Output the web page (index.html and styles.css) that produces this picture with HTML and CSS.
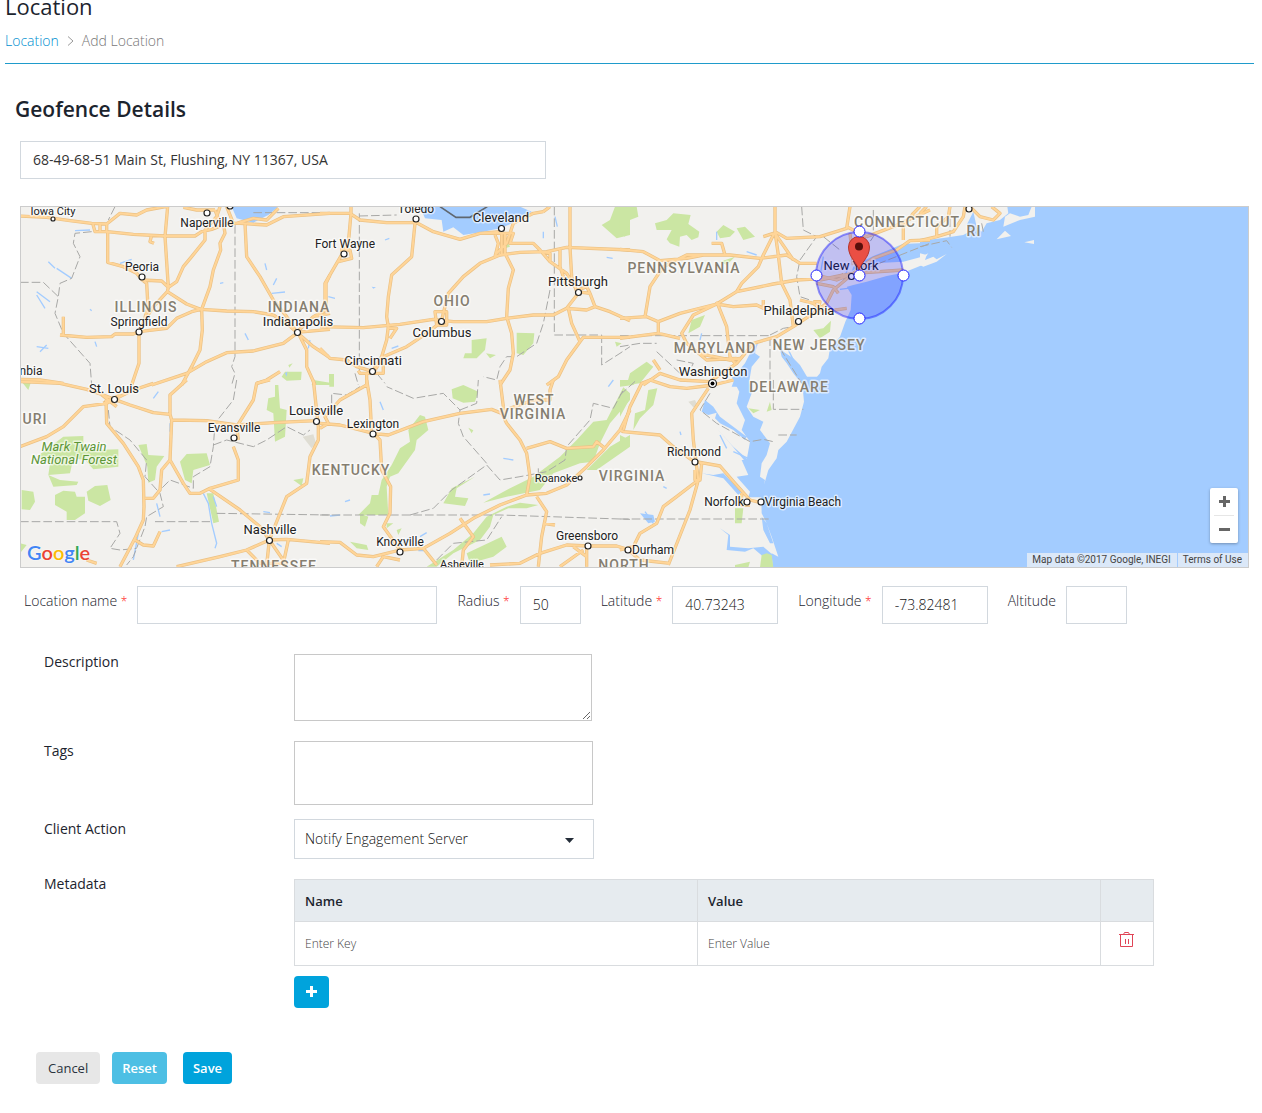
FILE: index.html
```html
<!DOCTYPE html>
<html lang="en">
<head>
  <meta charset="UTF-8">
  <meta name="viewport" content="width=device-width, initial-scale=1.0">
  <title>Add Location</title>
  <link rel="stylesheet" href="styles.css">
</head>
<body>
  <header class="page-header">
    <h1>Location</h1>
    <nav class="breadcrumb">
      <a href="#">Location</a>
      <svg width="7" height="10" viewBox="0 0 7 10"><path d="M1 .5 6 5 1 9.500" fill="none" stroke="#999"/></svg>
      <span>Add Location</span>
    </nav>
  </header>

  <main>
    <h2>Geofence Details</h2>
    <input class="field address" type="text" aria-label="Address" value="68-49-68-51 Main St, Flushing, NY 11367, USA">

    <div class="map">
      <svg class="map-canvas" viewBox="21 207 1227 360" preserveAspectRatio="xMinYMin slice">
        <defs>
          <g id="roads">
            <path transform="translate(60 600)" d="M0 48 80 52 150 62 215 70 260 72 300 40 350 45 380 30 445 18M260 72V95L225 95 218 70M240 70V92M262 95 340 103 435 108 525 108 545 95 575 88 620 70 660 70 740 75 790 50 930 40M395 105 390 125 402 130M263 95V187L310 200 350 220 365 238 380 250 384 320 370 370 357 395M365 240 425 243 445 262 470 245 490 200 515 170 555 120 555 90 590 50 600 20M443 20 435 110 445 262 442 275 500 312 542 328 620 333 700 335 760 345 800 370 830 397M442 275 400 320 384 345M490 22 530 30 585 30M610 70 615 100 600 130 602 150 580 210 570 260 545 328 547 390 540 450 515 500 485 555M357 395 340 402 285 402 275 410 200 412 120 405M130 350V405M357 395 440 385 470 355 515 335 542 328M357 395V490L335 555M395 555 500 520 560 485 620 458 700 453 790 430 830 400M675 70 680 170 720 230 760 300 800 350 830 397 930 388M830 397 880 350 930 340M835 400 860 450 860 500 885 555M840 405 880 440 925 470M930 225 918 250 918 330 880 350M640 70 620 20M585 30 600 70M650 70 700 55 740 60 775 25M0 538 60 540 130 550M710 550 740 540 780 515"/>
            <path transform="translate(960 600)" d="M0 40 90 40 120 60 200 68 290 68 340 95 420 118 480 100 540 95M93 20V40L85 130 50 190 15 250 15 310M60 150 90 150 95 175 55 185M285 70 275 170 215 225 205 290 200 350 205 380 200 420 185 470 160 510M0 380 130 383 240 373 340 358 400 365 500 365 560 355 640 345 700 345 740 325 775 280M365 360 385 280 430 230 480 190 540 165 600 157 680 155 740 142 930 150M555 100 555 160 580 210 565 265 560 350 575 400 580 460 570 510 540 555M525 105 535 130 525 170M545 100V165M480 100H580L570 130H640L660 150 690 185 740 220 770 270M580 70 560 130 525 165M670 35 640 40 580 70M690 20 670 35M750 20V142L755 230 770 275 810 280 825 320 870 335 930 362M720 150V200L740 260M660 155 690 160 690 185M740 325 800 330 825 320M745 325 755 370 780 425 740 480 715 530 680 555M780 425 790 412H930M345 335H380V375H350ZM365 365 320 400 260 440 190 470 165 510M0 445 30 475 80 480 110 500 150 512M115 512 120 520H190V470M140 555V520M205 385H230L210 415M775 270 800 260 810 280"/>
            <path transform="translate(1860 600)" d="M0 148 70 155 120 182 200 175 250 165 330 165 420 175 500 165 540 190 590 190M0 355 80 350 115 365 180 340 290 312 340 320 410 315 430 325V300M465 20V95L430 165 415 200 365 250 350 275M465 95 475 165 485 250 510 300 520 380M275 130 305 130 315 165M430 110 460 100M465 95 500 115 600 110 680 85 690 20M465 100 520 180M75 350 90 260 130 200 200 165 250 165M290 312 350 275 460 252 530 240 620 235 700 220 850 210M290 305 320 380 330 470 345 490M290 312 220 345 185 400 200 430 260 480 350 475M115 365V400L0 415M115 400 180 415M235 460 330 480 360 475M270 545 350 490 400 430 470 410 520 380 580 340 620 310 640 270 700 220 760 175 830 150 870 122 930 120M590 250 640 260 655 280M540 300 580 310 610 335 680 325M580 305H600L590 345M850 120V80L880 40 900 20M700 195 690 100M680 80 740 110 820 80 930 30M590 225 650 240 700 220M600 240 670 225M70 555 120 520 180 540 270 545M120 510 100 480"/>
            <path transform="translate(60 1140)" d="M0 5 120 10 200 28 250 45 283 58 340 30 400 10M283 58 260 70 190 80 130 140 80 170 0 200M240 40 290 80M250 70 300 45M258 60 260 130 310 190 355 260 370 300 372 380 370 420 345 475 300 560M283 58 330 75 400 98 450 103V45L500 0M450 103 455 120 560 122 650 135 760 128 890 122M455 120 450 240 425 270 420 330 400 355H375M450 240 490 310 510 340 540 340 570 325 655 300 655 240 640 200M650 140 700 60 710 10 750 0M650 135 655 180M570 328 660 390 720 440 748 480 680 510 600 530 470 560M748 480 800 350 860 310 870 230 895 180 895 140 880 0M748 480 800 478 930 490M748 480 800 555M748 480 740 555M680 510 720 550H790L805 480M345 480 370 495 400 498 420 455M200 540 230 550"/>
            <path transform="translate(960 1140)" d="M140 0 150 60 155 160 205 165 310 125 420 100 515 88 545 100 560 130 600 180 620 220 630 290 620 345M0 130 60 135 160 160M0 145 25 130 15 110 60 60 140 15M160 160 180 180 185 270 212 320 210 400 190 440 240 510 160 530 110 525 60 487 0 485M240 510 310 505 390 460 460 415 540 375 620 345 680 340 740 315 800 260 850 210 900 150 930 90M190 530 170 560M190 530 240 540M310 505 350 555M420 415 460 470 430 510 425 560M510 555 600 550 660 520 740 495 803 498 890 498 930 510M650 350 680 395 665 470 655 560M670 430 705 435M620 205 690 185 740 205 820 200 830 185 855 205M540 0 550 80 555 110M570 85 640 60 690 60 690 30 700 0M800 498V560M720 560 790 510M760 500 800 530"/>
            <path transform="translate(1860 1140)" d="M0 150 10 155 120 165 160 200 215 240M10 150 30 80 65 10 90 0 150 20 200 25 280 15 340 0M265 25 215 100 220 180 228 245 235 300 210 390 145 555M228 245 300 258 345 310 390 360 430 370M215 240 245 250 240 300H225V270M235 300 170 350 130 380 110 430 60 460 40 500 0 510M25 510 60 540 150 550M365 340V375H390"/>
            <path transform="translate(2760 600)" d="M0 122 50 110 100 95 130 50 135 20M50 110V80L85 50 90 20M150 20 180 50 220 60 240 40 215 20M0 40 20 20"/>
          </g>
        </defs>

        <rect class="land" x="21" y="207" width="1227" height="360"/>

        <g transform="scale(.33333)">
          <g class="park">
            <path transform="translate(60 600)" d="M795 515 845 515 843 540 800 542 785 530ZM805 495 818 490 808 503ZM875 555 880 540 930 548V555Z"/>
            <path transform="translate(960 600)" d="M845 75 870 60 885 20H930V105L890 115ZM455 420 500 415 495 450 470 475 430 475 435 460 455 460ZM590 398 643 400 640 430 610 465 590 460ZM498 460 528 465 510 475ZM27 522H42V555H27ZM560 120 570 140 555 145ZM885 425 905 430 890 440Z"/>
            <path transform="translate(1860 600)" d="M0 20H50L55 50 30 60 25 80 15 110 0 100ZM105 70 140 60 160 40 212 45 205 72 238 95 235 112 215 120 200 105 180 110 178 140 150 130 140 118 155 90 110 90ZM215 360 255 345 240 380 205 400ZM580 390 610 385 633 362 630 395 600 415ZM350 85 375 80 405 110 370 120ZM290 95 310 75 345 95 330 110 300 115ZM300 185 345 170 320 195ZM30 520 80 485 100 500 60 550 20 555Z"/>
            <path transform="translate(60 1140)" d="M130 170 190 168V210H225L295 208V260L220 268 195 240 160 235 150 280 85 285 90 250 50 230ZM5 330 40 335 45 365 30 390 5 388ZM105 345 130 332 165 335 170 350 195 350V400L165 420H140V395L105 375ZM200 335 225 318 262 315 272 360 240 378 205 362ZM355 195 380 192 385 225 433 228 410 260 405 300 385 308 382 260ZM480 245 500 222 560 220 570 255 520 270 515 310 495 300ZM560 340H580L597 425 580 430ZM765 15 775 15 780 85 800 90 795 170 765 185 760 100 740 90 745 55 765 50ZM820 300 850 295 845 318ZM85 285 120 300 175 305 170 315 100 320ZM5 5 35 0 25 30ZM0 490 20 495 0 520Z"/>
            <path transform="translate(960 1140)" d="M395 28 430 15 475 35 465 65 430 68 398 55ZM300 105 315 110 325 150 290 180 285 210 235 280 210 290 200 320 205 405 115 405 150 370 155 345 175 345 185 300 215 255 240 205 270 185 265 150ZM910 22 930 40V60L870 130 840 190 820 245 780 250 700 280 660 330 560 350 490 368 560 330 640 290 720 230 770 180 820 125 860 120ZM465 290 410 325 405 350 445 355 435 378 370 370 395 325ZM870 200 930 165V200L830 270H800ZM600 368 655 375 620 385 565 385 520 405 510 440 480 480 400 520 350 560H320L400 510 460 460 500 410 560 380ZM545 470 560 500 520 530 450 550 440 520ZM90 485 140 495 145 510 110 505ZM120 400 145 410 135 440 120 430ZM445 143 460 151 455 160ZM230 450 245 445 235 465ZM200 430 220 430 200 445ZM28 0H42V20H28Z"/>
            <path transform="translate(1860 1140)" d="M0 20 40 15 60 0H0ZM85 30 112 25 100 75 60 115 40 150 45 100 75 90ZM0 85 15 60 30 55 0 110ZM0 165 30 180 0 205ZM345 385 370 385 365 430 345 430ZM385 85 420 90 400 100ZM345 555 390 545 385 562H345ZM450 65 440 95 455 90Z"/>
          </g>

          <!-- Great Lakes, Atlantic, Chesapeake Bay -->
          <g class="water">
            <path transform="translate(60 600)" d="M635 20 650 55 700 68 745 45 775 20ZM795 520 802 515 800 530Z"/>
            <path transform="translate(960 600)" d="M300 20 315 55 365 60 370 95 400 82 430 105 490 95 540 85 600 60 635 35 600 20ZM155 260 168 262 160 266Z"/>
            <path transform="translate(1860 600)" d="M930 128 848 132 800 152 760 168 720 188 700 200 680 260 695 285 692 330 676 365 660 410 630 445 625 475 605 500 600 520 575 550 545 560H931V128ZM475 425 490 455 520 475 540 495 570 545 548 555 520 520 500 490 485 470ZM415 425 405 460 420 470 395 500 385 560H335L350 520 375 490 395 450Z"/>
            <path transform="translate(1860 1140)" d="M545-10 552 65 540 110 500 185 475 210 470 235 445 270 432 315 418 305 424 350 425 400 440 430 455 470 475 530 455 520 458 564H931V-10ZM335-10 358 35 350 70 375 120 365 150 390 185 380 240 365 240 385 285 350 290 390 335 385 352 425 352 435 300 420 290 425 250 440 225 450 190 420 150 430 125 400 110 380 80 395 40 385-10ZM255 60 245 95 265 105 290 98 285 115 300 130 340 150 375 180 380 170 340 140 300 110 280 80ZM290 145 330 190 380 250 385 240 340 200ZM245 280 310 295 355 345 365 335 310 280 280 285ZM300 445 325 465 320 510 375 515 400 505 430 530 465 530 430 500 385 505 330 500 330 465ZM425 410 440 430 460 490 450 490 430 450ZM60 400 100 405 105 425 85 430Z"/>
            <path transform="translate(2760 600)" d="M0 20H990V1110H0Z"/>
          </g>
          <path class="park" transform="translate(1860 1140)" d="M425 525 440 520 455 525 460 562H420Z"/>
          <g class="land">
            <path transform="translate(2760 600)" d="M0 20V124L40 118 70 114 130 105 152 92 140 75 160 35 170 80 185 95 200 70 240 60 265 40 262 20ZM345 20V50L300 60 250 80 255 50 270 40 300 50 325 45 335 20ZM230 118 255 92 273 108ZM313 127 342 120V132ZM0 160 20 165 15 180 40 170 50 178 80 162 50 185 10 200 0 195Z"/>
            <path transform="translate(1860 600)" d="M690 215 730 195 790 188 850 185 900 172 925 160 910 180 930 188 900 198 850 218 800 228 740 245 700 255 665 265 665 235Z"/>
          </g>
          <g class="river">
            <path transform="translate(60 600)" d="M85 185 105 205M110 205 155 235M50 275 90 305M50 285 75 325M300 190 335 178M165 92 210 90M50 440 85 445M60 455 80 435M770 235 760 255M755 280 795 276M675 400 685 420M225 425 230 440M735 190 740 210M870 420 865 445M600 250 610 248M210 328 215 332"/>
            <path transform="translate(960 600)" d="M670 95V115M705 50 712 80M780 235 785 260M25 290 45 295M195 120 208 115M215 445 235 438M860 172 878 175"/>
            <path transform="translate(1860 600)" d="M290 95V120M610 170 600 230M690 190 670 240M660 268 705 262M240 420 245 400M500 440 530 500M380 155 410 165"/>
            <path transform="translate(60 1140)" d="M400 55 415 35M450 130V155M550 340 565 370 575 430 590 490 585 505M580 350 590 380M410 370 420 410M355 460 340 540M425 455 450 450M730 395 750 398M770 490 785 500"/>
            <path transform="translate(960 1140)" d="M75 365 90 360M30 408 60 405M250 490 270 470M300 470 320 458M550 235 580 240M490 345 510 342M295 512 320 512M180 65 190 90M865 20 880 0"/>
            <path transform="translate(1860 1140)" d="M180 155 183 165M130 320 140 325M340 215 385 235M300 165 320 205M75 395 100 430"/>
          </g>
          <g class="border">
            <path transform="translate(60 600)" d="M645 75V470L635 500 645 520 635 555M0 247H70L115 290 105 340 130 400 210 490 215 555M215 95 165 100 160 130 180 170 155 235 120 250 115 290M700 38H930M285 20 265 60"/>
            <path transform="translate(960 600)" d="M118 40V520M118 48 230 45M703 20V405H845V495L900 460 930 440M690 270 670 370 650 430 590 470 560 470 540 500 530 540 490 530M170 520 195 550M105 520 115 555"/>
            <path transform="translate(1860 600)" d="M0 407H450V555M450 405 490 385 520 380M545 20 550 90 590 110 540 180 530 230 540 290 570 300M610 110 660 150M760 30V110L740 140M480 445 545 550M740 205 930 130M110 455 180 520M170 480 220 490 210 510M0 440 60 430 110 430"/>
            <path transform="translate(60 1140)" d="M0 425H290L300 460 270 505 300 510 350 505M265 90 270 140 330 180 380 240 375 290 420 340 430 380 380 410 375 440 340 530 320 555M405 425H570M590 400 930 405M650 0 640 60 585 130 580 200 570 260 520 290 520 325 450 300 420 330M580 195 620 180 700 200 740 180 800 140 850 165 870 150"/>
            <path transform="translate(960 1140)" d="M0 405H540L930 418M270 405 340 385 395 330 500 255 540 300 600 290 680 275 735 240 740 200 810 120 820 70 880 85 910 30M500 250 430 170 415 130 420 90 370 40 280 55 200 20M420 90 470 70 475 0M35 70V40L80 45 120 20M350 540 400 490 500 480 545 410M655 290V265"/>
            <path transform="translate(1860 1140)" d="M0 417H450M270 40 240 90 290 130 390 185 430 178 460 185M460 0V88H550M475 165H530M0 45 50 0"/>
            <path transform="translate(2760 600)" d="M90 20V110M0 140 80 122 95 142M185 70 190 95"/>
          </g>
          <path class="lake-border" d="M1320 620 1368 652H1410L1462 620"/>
          <path class="town" d="M908 1310 940 1303 948 1330 935 1345ZM2065 1205 2085 1200 2092 1215 2080 1222Z"/>
          <use href="#roads" class="road-casing"/>
          <use href="#roads" class="road"/>
        </g>

        <g class="state">
          <text x="146" y="312">ILLINOIS</text>
          <text x="299" y="312">INDIANA</text>
          <text x="452" y="306">OHIO</text>
          <text x="684" y="273">PENNSYLVANIA</text>
          <text x="907" y="227">CONNECTICUT</text>
          <text x="974" y="236">RI</text>
          <text x="715" y="353">MARYLAND</text>
          <text x="819" y="350">NEW JERSEY</text>
          <text x="789" y="392">DELAWARE</text>
          <text x="534" y="405">WEST</text>
          <text x="533" y="419">VIRGINIA</text>
          <text x="35" y="424">URI</text>
          <text x="351" y="475">KENTUCKY</text>
          <text x="632" y="481">VIRGINIA</text>
          <text x="274" y="571">TENNESSEE</text>
          <text x="624" y="570">NORTH</text>
        </g>

        <g class="city">
          <text x="501" y="222">Cleveland</text><circle cx="501.500" cy="228.500" r="3"/>
          <text x="298" y="326">Indianapolis</text><circle cx="297.500" cy="332.500" r="3"/>
          <text x="442" y="337">Columbus</text><circle cx="441.500" cy="321.500" r="3"/>
          <text x="578" y="286">Pittsburgh</text><circle cx="578.500" cy="292.500" r="3"/>
          <text x="373" y="365">Cincinnati</text><circle cx="372.500" cy="371.500" r="3"/>
          <text x="114" y="393">St. Louis</text><circle cx="114.500" cy="399.500" r="3"/>
          <text x="316" y="415">Louisville</text><circle cx="316.500" cy="421.500" r="3"/>
          <text x="713" y="376">Washington</text><circle cx="712.500" cy="383.500" r="4"/>
          <text x="799" y="315">Philadelphia</text><circle cx="798.500" cy="321.500" r="3"/>
          <text x="851" y="270">New York</text><circle cx="851.500" cy="276.500" r="3"/>
          <text x="270" y="534">Nashville</text><circle cx="269.500" cy="540.500" r="3"/>
        </g>
        <circle cx="712.500" cy="383.500" r="2"/>

        <g class="town-label">
          <text x="53" y="215" class="small">Iowa City</text><circle cx="53" cy="219" r="2"/>
          <text x="207" y="227">Naperville</text><circle cx="207" cy="213" r="3"/>
          <text x="416" y="213">Toledo</text><circle cx="416" cy="219" r="3"/>
          <text x="345" y="248">Fort Wayne</text><circle cx="344" cy="254" r="3"/>
          <text x="142" y="271">Peoria</text><circle cx="142" cy="277" r="3"/>
          <text x="139" y="326">Springfield</text><circle cx="139" cy="332" r="3"/>
          <text x="31" y="375">nbia</text>
          <text x="234" y="432">Evansville</text><circle cx="234" cy="438" r="3"/>
          <text x="373" y="428">Lexington</text><circle cx="373" cy="434" r="3"/>
          <text x="694" y="456">Richmond</text><circle cx="695" cy="462" r="3"/>
          <text x="724" y="506">Norfolk</text><circle cx="747" cy="502" r="3"/>
          <text x="803" y="506">Virginia Beach</text><circle cx="761" cy="502" r="3"/>
          <text x="653" y="554">Durham</text><circle cx="628" cy="550" r="3"/>
          <text x="587" y="540">Greensboro</text><circle cx="588" cy="546" r="3"/>
          <text x="556" y="482" class="small">Roanoke</text><circle cx="580" cy="478" r="2"/>
          <text x="400" y="546">Knoxville</text><circle cx="400" cy="552" r="3"/>
          <text x="462" y="568" class="small">Asheville</text>
          <circle cx="230" cy="206" r="3"/>
          <circle cx="969" cy="209" r="3"/>
        </g>
        <g class="forest">
          <text x="74" y="451">Mark Twain</text>
          <text x="74" y="464">National Forest</text>
        </g>

        <g class="fence">
          <circle cx="859.500" cy="275.500" r="43.500"/>
          <path class="pin" d="M859 271c-1-8-10.500-13-10.500-24a10.500 10.500 0 0 1 21 0c0 11-9.500 16-10.500 24z"/>
          <circle class="pin-dot" cx="859" cy="246.500" r="4"/>
          <g class="handle">
            <circle cx="859.500" cy="231.500" r="5.500"/>
            <circle cx="816.500" cy="275.500" r="5.500"/>
            <circle cx="859.500" cy="275.500" r="5.500"/>
            <circle cx="903.500" cy="275.500" r="5.500"/>
            <circle cx="859.500" cy="318.500" r="5.500"/>
          </g>
        </g>
      </svg>

      <div class="logo"><span class="blue">G</span><span class="red">o</span><span class="yellow">o</span><span class="blue">g</span><span class="green">l</span><span class="red">e</span></div>
      <div class="zoom">
        <button type="button" aria-label="Zoom in"><svg width="11" height="11" viewBox="0 0 11 11"><path d="M5.500 0V11M0 5.500H11"/></svg></button>
        <button type="button" aria-label="Zoom out"><svg width="11" height="11" viewBox="0 0 11 11"><path d="M0 5.500H11"/></svg></button>
      </div>
      <div class="attribution">
        <span>Map data ©2017 Google, INEGI</span>
        <a href="#">Terms of Use</a>
      </div>
    </div>

    <form>
      <div class="inline-fields">
        <label for="name">Location name <em>*</em></label>
        <input class="field wide" id="name" type="text">
        <label for="radius">Radius <em>*</em></label>
        <input class="field narrow" id="radius" type="text" value="50">
        <label for="lat">Latitude <em>*</em></label>
        <input class="field medium" id="lat" type="text" value="40.73243">
        <label for="lng">Longitude <em>*</em></label>
        <input class="field medium" id="lng" type="text" value="-73.82481">
        <label for="alt">Altitude</label>
        <input class="field narrow" id="alt" type="text">
      </div>

      <div class="rows">
        <label for="description">Description</label>
        <textarea class="description" id="description"></textarea>

        <label for="tags">Tags</label>
        <textarea class="tags" id="tags"></textarea>

        <label for="action">Client Action</label>
        <div class="select">
          <select id="action"><option>Notify Engagement Server</option></select>
          <svg width="9" height="5" viewBox="0 0 9 5"><path d="M0 0H9L4.500 5Z" fill="#242d38"/></svg>
        </div>

        <div class="row-title">Metadata</div>
        <div class="metadata">
          <table>
            <thead>
              <tr><th>Name</th><th>Value</th><th class="tools"></th></tr>
            </thead>
            <tbody>
              <tr>
                <td><input type="text" placeholder="Enter Key" aria-label="Key"></td>
                <td><input type="text" placeholder="Enter Value" aria-label="Value"></td>
                <td class="tools">
                  <button type="button" aria-label="Delete row">
                    <svg width="15" height="16" viewBox="0 0 15 16"><path d="M0 2.500H15M1.500 2.500V14.500H13.500V2.500M4.500 2.500 5.500 .5H9.500L10.500 2.500M6.500 7V12M9.500 7V12"/></svg>
                  </button>
                </td>
              </tr>
            </tbody>
          </table>
          <button class="btn add" type="button" aria-label="Add row"><svg width="11" height="11" viewBox="0 0 11 11"><path d="M5.500 0V11M0 5.500H11" stroke="#fff" stroke-width="3"/></svg></button>
        </div>
      </div>

      <div class="actions">
        <button class="btn cancel" type="button">Cancel</button>
        <button class="btn reset" type="reset">Reset</button>
        <button class="btn save" type="submit">Save</button>
      </div>
    </form>
  </main>
</body>
</html>
```

FILE: styles.css
```css
* {
  box-sizing: border-box;
}
body {
  margin: 0;
  background: #fff;
  color: #1c242e;
  font: 300 14px/20px "Open Sans", "Noto Sans", sans-serif;
}
input, textarea, select, button {
  margin: 0;
  font: inherit;
  color: inherit;
}
.page-header {
  margin: -9px 8px 0 5px;
  padding-bottom: 12px;
  border-bottom: 1px solid #1f9bcb;
}
h1 {
  margin: 0;
  font-size: 22px;
  line-height: 30px;
  font-weight: 400;
}
.breadcrumb {
  display: flex;
  align-items: center;
  gap: 8px;
  margin-top: 10px;
  color: #777;
}
.breadcrumb a {
  color: #008fd0;
  text-decoration: none;
}
main {
  padding: 30px 13px 29px 15px;
}
h2 {
  margin: 0 0 17px;
  font-size: 21px;
  line-height: 30px;
  font-weight: 600;
}
.field {
  height: 38px;
  padding: 0 12px 1px;
  border: 1px solid #d2d8de;
  background: #fff;
  color: #111;
}
.address {
  display: block;
  width: 526px;
  margin-left: 5px;
  color: #333;
  font-weight: 400;
}

/* map */
.map {
  position: relative;
  height: 362px;
  margin: 27px 0 0 5px;
  border: 1px solid #ccc;
  background: #a3ccff;
  overflow: hidden;
  font-family: Roboto, sans-serif;
  font-weight: 400;
}
.map-canvas {
  display: block;
  width: 100%;
  height: 360px;
}
.land { fill: #f2f1ee; }
.park { fill: #cbe6a3; }
.water { fill: #a3ccff; }
.town { fill: #dfddd3; }
.river {
  fill: none;
  stroke: #a3ccff;
  stroke-width: 4;
}
.border {
  fill: none;
  stroke: #a8a8a6;
  stroke-width: 3;
  stroke-dasharray: 26 9;
}
.lake-border {
  fill: none;
  stroke: #5f6770;
  stroke-width: 5;
}
.road-casing, .road {
  fill: none;
  stroke-linejoin: round;
}
.road-casing {
  stroke: #ebc184;
  stroke-width: 10;
}
.road {
  stroke: #ffd598;
  stroke-width: 6;
}
.map-canvas text {
  text-anchor: middle;
  paint-order: stroke;
  stroke: #fff;
  stroke-opacity: .6;
  stroke-width: 3px;
  stroke-linejoin: round;
  fill: #222;
}
.state {
  font-size: 14px;
  font-weight: 500;
  letter-spacing: 1px;
}
.map-canvas .state text { fill: #857e70; }
.city { font-size: 13px; }
.town-label { font-size: 12px; }
.town-label .small { font-size: 11px; }
.forest {
  font-size: 13px;
  font-style: italic;
}
.map-canvas .forest text { fill: #5c9637; }
.city circle, .town-label circle {
  fill: #fff;
  stroke: #222;
  stroke-width: 1.2px;
}
.fence > circle {
  fill: #00f;
  fill-opacity: .2;
  stroke: #00f;
  stroke-opacity: .4;
  stroke-width: 2px;
}
.fence .pin {
  fill: #ea4f44;
  stroke: #b5352d;
}
.fence .pin-dot {
  fill: #590f0b;
  fill-opacity: 1;
  stroke: none;
}
.handle {
  fill: #fff;
  stroke: #2020ff;
}
.logo {
  position: absolute;
  left: 6px;
  bottom: 3px;
  font: 600 20px/24px Lato, sans-serif;
  text-shadow: 0 0 2px #fff;
}
.blue { color: #4285f4; }
.red { color: #ea4335; }
.yellow { color: #fbbc05; }
.green { color: #34a853; }
.zoom {
  position: absolute;
  right: 10px;
  bottom: 24px;
  display: flex;
  flex-direction: column;
  width: 28px;
  padding: 0 4px;
  border-radius: 2px;
  background: #fff;
  box-shadow: 0 1px 3px rgba(0, 0, 0, .3);
}
.zoom button {
  display: flex;
  align-items: center;
  justify-content: center;
  height: 27px;
  padding: 0;
  border: 0;
  background: none;
}
.zoom button + button {
  height: 28px;
  border-top: 1px solid #e6e6e6;
}
.zoom path {
  stroke: #666;
  stroke-width: 3;
}
.attribution {
  position: absolute;
  right: 0;
  bottom: 0;
  display: flex;
  gap: 1px;
  font-size: 10px;
  line-height: 14px;
  color: #444;
}
.attribution span, .attribution a {
  padding: 0 6px 0 5px;
  background: #dbe8f8;
  color: inherit;
  text-decoration: none;
}

/* form */
.inline-fields {
  display: flex;
  flex-wrap: wrap;
  margin: 18px 0 0 9px;
}
.inline-fields label {
  margin: 5px 10px 0 0;
}
.inline-fields .field {
  margin-right: 20px;
}
em {
  color: #f22;
  font-size: 12px;
  font-style: normal;
}
.wide { width: 300px; }
.medium { width: 106px; }
.narrow { width: 61px; }

.rows {
  display: grid;
  grid-template-columns: 250px 1fr;
  justify-items: start;
  margin: 28px 0 0 29px;
}
.rows label, .row-title {
  font-weight: 400;
}
textarea {
  display: block;
  padding: 6px 10px;
  border: 1px solid #c8c8c8;
  background: #fff;
}
.description {
  width: 298px;
  height: 67px;
  margin: 2px 0 20px;
}
.tags {
  width: 299px;
  height: 64px;
  margin-bottom: 14px;
  resize: none;
}
.select {
  position: relative;
  width: 300px;
  margin-bottom: 15px;
}
.select select {
  display: block;
  width: 100%;
  height: 40px;
  padding: 0 10px;
  border: 1px solid #d2d8de;
  border-radius: 0;
  background: #fff;
  appearance: none;
  color: #111;
}
.select svg {
  position: absolute;
  right: 20px;
  top: 19px;
}
.metadata {
  width: 100%;
  max-width: 860px;
  padding-top: 5px;
}
table {
  width: 100%;
  border-collapse: collapse;
  table-layout: fixed;
}
th, td {
  padding: 0 10px;
  border: 1px solid #d9dcdf;
  text-align: left;
}
th {
  height: 42px;
  background: #e6ebef;
  font-size: 13px;
  font-weight: 600;
}
td {
  height: 44px;
}
.tools {
  width: 53px;
}
td input {
  width: 100%;
  padding: 0;
  border: 0;
  font-size: 12px;
}
td input::placeholder {
  color: #444;
}
.tools button {
  display: flex;
  padding: 0 8px 7px;
  border: 0;
  background: none;
}
.tools path {
  fill: none;
  stroke: #e04456;
}
.btn {
  height: 32px;
  padding: 0 12px;
  border: 0;
  border-radius: 4px;
  background: #00a3dc;
  color: #fff;
  font-size: 13px;
}
.add {
  display: block;
  margin-top: 10px;
}
.actions {
  display: flex;
  gap: 12px;
  margin: 44px 0 0 21px;
}
.cancel {
  background: #e7e7e7;
  color: #2a333e;
  font-weight: 400;
}
.reset {
  margin-right: 4px;
  padding: 0 10px;
  background: #4dbfe4;
  font-weight: 600;
}
.save {
  padding: 0 10px;
  font-weight: 600;
}
```
